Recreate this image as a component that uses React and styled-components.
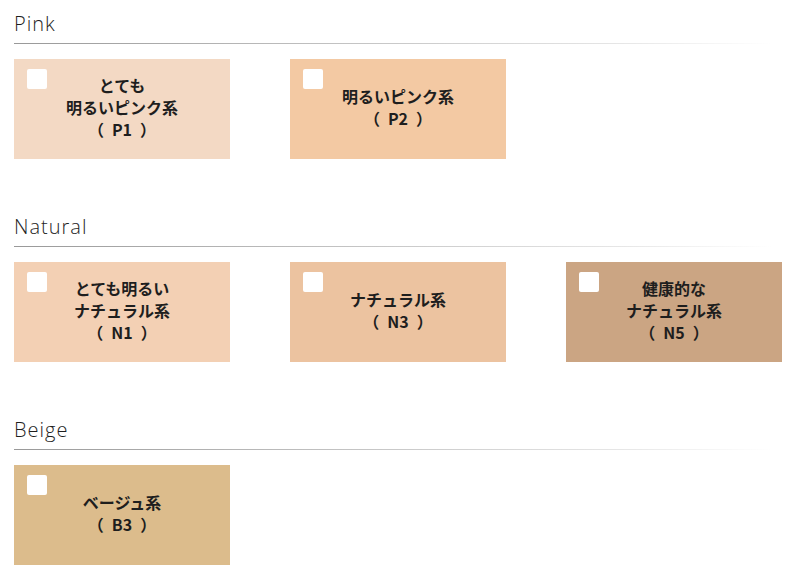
import React from 'react';
import styled, { createGlobalStyle } from 'styled-components';

const GlobalStyle = createGlobalStyle`
  html, body {
    margin: 0;
    padding: 0;
    background: #fff;
  }
`;

const Page = styled.div`
  padding: 10px 14px 0;
  font-family: "Open Sans", "Noto Sans CJK JP", sans-serif;
`;

const Section = styled.section`
  margin-bottom: 54px;

  &:last-child {
    margin-bottom: 0;
  }
`;

const Heading = styled.h2`
  margin: 0;
  font-size: 20px;
  line-height: 27px;
  font-weight: 300;
  letter-spacing: 1px;
  color: #1e1e1e;
  padding-bottom: 6px;

  &::after {
    content: '';
    display: block;
    height: 1px;
    width: 758px;
    margin-top: 6px;
    background: linear-gradient(to right, #999 0%, #c4c4c4 45%, #e6e6e6 80%, rgba(255, 255, 255, 0) 100%);
  }
`;

const Grid = styled.div`
  display: grid;
  grid-template-columns: repeat(3, 216px);
  column-gap: 60px;
  margin-top: 9px;
`;

const Card = styled.label`
  position: relative;
  height: 100px;
  background: ${(p) => p.$color};
  display: flex;
  align-items: center;
  justify-content: center;
  cursor: pointer;
`;

const Check = styled.input.attrs({ type: 'checkbox' })`
  appearance: none;
  position: absolute;
  top: 10px;
  left: 13px;
  width: 20px;
  height: 20px;
  margin: 0;
  background: #fff;
  border-radius: 2px;
`;

const Label = styled.span`
  font-family: "Noto Sans CJK JP", sans-serif;
  font-size: 16px;
  font-weight: 700;
  line-height: 22px;
  color: #1e1e1e;
  text-align: center;
  white-space: pre-line;
  margin-top: -4px;
`;

const groups = [
  {
    title: 'Pink',
    items: [
      { color: '#f3d9c4', text: 'とても\n明るいピンク系\n（\u2002P1\u2002）' },
      { color: '#f3c9a3', text: '明るいピンク系\n（\u2002P2\u2002）' },
    ],
  },
  {
    title: 'Natural',
    items: [
      { color: '#f3d0b4', text: 'とても明るい\nナチュラル系\n（\u2002N1\u2002）' },
      { color: '#ecc3a0', text: 'ナチュラル系\n（\u2002N3\u2002）' },
      { color: '#cba583', text: '健康的な\nナチュラル系\n（\u2002N5\u2002）' },
    ],
  },
  {
    title: 'Beige',
    items: [{ color: '#dcbc8c', text: 'ベージュ系\n（\u2002B3\u2002）' }],
  },
];

const App = () => {
  return (
    <Page>
      <GlobalStyle />
      {groups.map((g) => (
        <Section key={g.title}>
          <Heading>{g.title}</Heading>
          <Grid>
            {g.items.map((item) => (
              <Card key={item.text} $color={item.color}>
                <Check />
                <Label>{item.text}</Label>
              </Card>
            ))}
          </Grid>
        </Section>
      ))}
    </Page>
  );
};

export default App;
